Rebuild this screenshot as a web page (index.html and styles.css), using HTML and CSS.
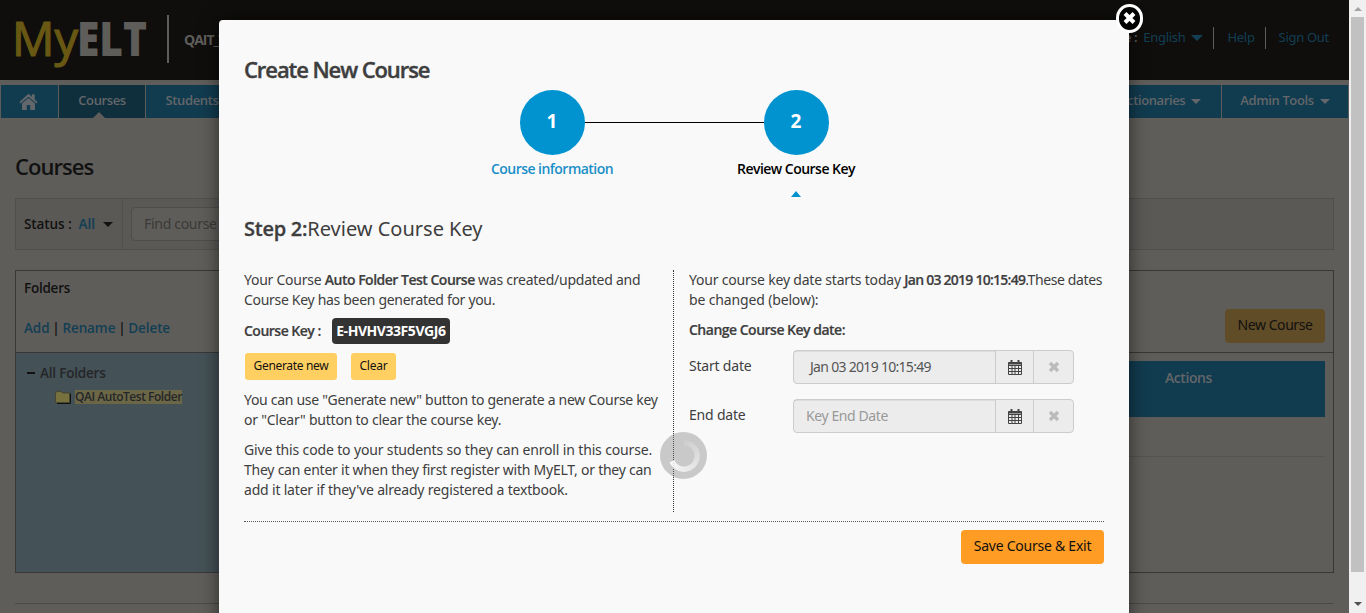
FILE: index.html
```html
<!DOCTYPE html>
<html lang="en">
<head>
<meta charset="utf-8">
<title>MyELT</title>
<link rel="stylesheet" href="styles.css">
</head>
<body>
<div class="window">
  <div class="page">
    <header class="top">
      <svg class="logo" width="132" height="54" viewBox="0 0 132 54">
        <text class="logo-my" x="-4" y="41" textLength="66" lengthAdjust="spacingAndGlyphs">My</text>
        <text class="logo-elt" x="61" y="41" textLength="70" lengthAdjust="spacingAndGlyphs">ELT</text>
      </svg>
      <span class="org">QAIT_T</span>
      <div class="account">
        <span class="lang">Language :</span>
        <a class="english">English</a><i class="caret big"></i>
        <a class="help">Help</a>
        <a class="signout">Sign Out</a>
      </div>
    </header>
    <nav class="nav">
      <a class="tab home"><svg width="20" height="18" viewBox="0 0 20 18"><path d="M9.500.8.3 9.100l1.300 1.500L9.500 3.700l7.900 6.900 1.300-1.500-3-2.700V1.300h-2.800v2.500z"/><path d="M3 10.600 9.500 5l6.500 5.600V17h-4.800v-5H7.800v5H3z"/></svg></a>
      <a class="tab active">Courses</a>
      <a class="tab students">Students</a>
      <span class="grow"></span>
      <a class="tab dict">Dictionaries<i class="caret"></i></a>
      <a class="tab admin">Admin Tools<i class="caret"></i></a>
    </nav>
    <main class="main">
      <h1>Courses</h1>
      <div class="filter">
        <div class="status"><b>Status :</b><a>All</a><i class="caret"></i></div>
        <div class="find">Find course</div>
      </div>
      <div class="board">
        <div class="folders">
          <div class="folders-head">
            <b>Folders</b>
            <div class="links"><a>Add</a><b>|</b><a>Rename</a><b>|</b><a>Delete</a></div>
          </div>
          <div class="tree">
            <div class="root"><i class="minus"></i>All Folders</div>
            <div class="leaf"><svg width="16" height="14" viewBox="0 0 16 14"><path class="f-shadow" d="M2 13.500h13.500V3.500"/><path class="f-body" d="M.5 12.500V3L2 1.500h4L7.500 3h7v9.500z"/></svg><span>QAI AutoTest Folder</span></div>
          </div>
        </div>
        <div class="list">
          <div class="list-head"><span class="new">New Course</span></div>
          <div class="thead">Actions</div>
          <div class="trow"></div>
        </div>
      </div>
      <div class="rule"></div>
    </main>
  </div>
  <div class="scroll"><i class="up"></i><div class="thumb"></div><i class="down"></i></div>

  <section class="modal">
    <svg class="close" width="28" height="30" viewBox="0 0 28 30"><rect x="1.500" y="1.500" width="24" height="26" rx="12" ry="12.500"/><path d="m9 9.500 9 9m0-9-9 9"/></svg>
    <h2>Create New Course</h2>
    <div class="steps">
      <div class="step first"><span class="dot">1</span><span class="label">Course information</span></div>
      <div class="join"></div>
      <div class="step second"><span class="dot">2</span><span class="label">Review Course Key</span><i class="tip"></i></div>
    </div>
    <h3><b>Step 2:</b><span>Review Course Key</span></h3>
    <div class="cols">
      <div class="left">
        <p><span class="a1">Your Course <b>Auto Folder Test Course</b> was created/updated and</span><br><span class="a2">Course Key has been generated for you.</span></p>
        <div class="key"><b>Course Key :</b><code>E-HVHV33F5VGJ6</code></div>
        <div class="acts"><span class="btn gen">Generate new</span><span class="btn clear">Clear</span></div>
        <p><span class="a3">You can use "Generate new" button to generate a new Course key</span><br><span class="a4">or "Clear" button to clear the course key.</span></p>
        <p><span class="a5">Give this code to your students so they can enroll in this course.</span><br><span class="a6">They can enter it when they first register with MyELT, or they can</span><br><span class="a7">add it later if they've already registered a textbook.</span></p>
      </div>
      <div class="right">
        <p><span class="b1">Your course key date starts today <b>Jan 03 2019 10:15:49</b><span class="b1-end">.These dates</span></span><br><span class="b2">be changed (below):</span></p>
        <p class="b3"><b>Change Course Key date:</b></p>
        <div class="field"><label>Start date</label><div class="group">
          <span class="input value">Jan 03 2019 10:15:49</span>
          <span class="addon"><svg width="14" height="15" viewBox="0 0 14 15"><path class="cal" d="M.5 2.500h13v12H.5zM.5 5.500h13M.5 8.500h13M.5 11.500h13M4 5.500v9M7 5.500v9M10.500 5.500v9"/><path class="ring" d="M.5 3.500h13M3.500 0v4M10.500 0v4"/></svg></span>
          <span class="addon last"><svg width="12" height="12" viewBox="0 0 12 12"><path class="x" d="m2 2 8 8m0-8-8 8"/></svg></span></div></div>
        <div class="field"><label>End date</label><div class="group">
          <span class="input hint">Key End Date</span>
          <span class="addon"><svg width="14" height="15" viewBox="0 0 14 15"><path class="cal" d="M.5 2.500h13v12H.5zM.5 5.500h13M.5 8.500h13M.5 11.500h13M4 5.500v9M7 5.500v9M10.500 5.500v9"/><path class="ring" d="M.5 3.500h13M3.500 0v4M10.500 0v4"/></svg></span>
          <span class="addon last"><svg width="12" height="12" viewBox="0 0 12 12"><path class="x" d="m2 2 8 8m0-8-8 8"/></svg></span></div></div>
      </div>
    </div>
    <div class="foot"><span class="save">Save Course &amp; Exit</span></div>
    <div class="spinner"><i></i></div>
  </section>
</div>
</body>
</html>
```
FILE: styles.css
```css
* { box-sizing: border-box; }
body {
  margin: 0;
  overflow: hidden;
  font: 14px/20px "Noto Sans", "Open Sans", sans-serif;
  color: #3e3e3e;
}
b, h1, h2, h3 { font-family: "Open Sans", "Noto Sans", sans-serif; font-weight: 600; }
h1, h2, h3, p { margin: 0; }
a { color: #123f54; }
svg { display: block; }
.window { position: relative; display: flex; width: 1366px; height: 613px; overflow: hidden; }
.page { width: 1349px; background: #5f5d5a; color: #111; white-space: nowrap; }

/* header */
.top { display: flex; height: 80px; background: #0f0e0c; }
.logo { margin: 15px 0 0 16px; overflow: visible; }
.logo-my { font: 400 47px "Open Sans", sans-serif; fill: #685813; stroke: #685813; stroke-width: 1.2px; }
.logo-elt { font: 800 47px "Open Sans", sans-serif; fill: #5f5d5a; }
.org { height: 48px; margin: 15px 0 0 19px; padding-left: 15px; border-left: 2px solid #5f5d5a; font: 700 14px/50px "Open Sans", sans-serif; color: #5f5d5a; letter-spacing: -1px; }
.account { display: flex; align-items: center; height: 22px; margin: 27px 20px 0 auto; font-size: 13px; line-height: 18px; letter-spacing: -.3px; }
.lang { color: #5f5d5a; margin-right: 6px; font-weight: 600; }
.help { border-left: 1px solid #5f5d5a; margin-left: 10px; padding: 1px 10px 3px 13px; }
.signout { border-left: 1px solid #5f5d5a; padding: 1px 0 3px 13px; }
.account .english, .lang { padding-bottom: 2px; }
.caret { display: inline-block; border: 5px solid transparent; border-top: 5px solid currentColor; border-bottom: 0; }
.big { border-width: 6px 6px 0; margin-left: 6px; margin-bottom: 1px; color: #123f54; }

.nav { display: flex; gap: 1px; margin-top: 5px; padding: 0 1px; height: 33px; font: 600 13px/32px "Open Sans", sans-serif; letter-spacing: -.38px; }
.tab { display: flex; align-items: center; justify-content: center; padding-bottom: 3px; background: #113b4e; color: #63666a; }
.home { width: 57px; padding: 0 2px 0 0; }
.home svg { fill: #63666a; }
.active { position: relative; width: 86px; background: #102f3d; }
.active::after { content: ""; position: absolute; left: 34px; bottom: 0; border: 6px solid transparent; border-top: 0; border-bottom-color: #5f5d5a; }
.students { width: 92px; }
.grow { flex: 1; background: #113b4e; margin: 0 -1px; }
.dict, .admin { width: 126px; gap: 6px; }
.tab .caret { margin-top: 2px; }

/* course page */
.main { padding: 0 15px; }
h1 { padding-top: 33px; font-size: 22px; line-height: 30px; letter-spacing: -.95px; }
.filter { display: flex; height: 52px; margin-top: 17px; border: 1px solid #504f4c; background: #5b5956; }
.status { display: flex; align-items: center; width: 107px; padding-left: 8px; border-right: 1px solid #504f4c; font-weight: 600; font-size: 13.500px; letter-spacing: -.1px; }
.status a { margin: 0 8px 0 7px; }
.find { width: 200px; height: 34px; margin: 8px; padding: 0 12px; border: 1px solid #4e4d4a; border-radius: 4px; background: #5f5d5a; line-height: 31px; color: #3b3a38; letter-spacing: -.3px; }
.board { display: flex; height: 303px; margin-top: 20px; border: 1px solid #383735; }
.folders { width: 300px; border-right: 1px solid #383735; }
.folders-head { height: 82px; padding: 7px 8px; border-bottom: 1px solid #383735; font-size: 13.500px; letter-spacing: -.25px; }
.links { display: flex; gap: 2px; margin-top: 20px; }
.links a { font-family: "Open Sans", sans-serif; font-weight: 600; letter-spacing: -.1px; }
.links b { width: 9px; text-align: center; }
.tree { height: 219px; padding: 10px 11px; background: #445156; font: 600 13.500px/20px "Open Sans", sans-serif; color: #242629; letter-spacing: -.2px; }
.root { display: flex; align-items: center; gap: 5px; }
.minus { width: 8px; height: 2px; background: #111; }
.leaf { display: flex; align-items: center; gap: 4px; margin: 7px 0 0 28px; font-size: 12px; line-height: 14px; letter-spacing: -.47px; }
.leaf span { background: #6b6646; }
.f-body { fill: #77713f; stroke: #47452b; }
.f-shadow { fill: none; stroke: #111; }
.list { flex: 1; }
.list-head { display: flex; justify-content: flex-end; height: 82px; padding: 38px 8px 0; border-bottom: 1px solid #383735; }
.new { width: 100px; height: 34px; border-radius: 4px; background: #604c27; text-align: center; line-height: 31px; letter-spacing: -.45px; }
.thead { height: 56px; margin: 8px 8px 0; padding: 7px 113px; background: #113b4e; color: #63666a; text-align: right; font: 600 14px/20px "Open Sans", sans-serif; letter-spacing: -.4px; }
.trow { height: 40px; margin: 0 8px; border-bottom: 1px solid #54534f; }
.rule { height: 1px; margin-top: 30px; background: #4b4a47; }

/* window scroll bar */
.scroll { display: flex; flex-direction: column; align-items: center; width: 17px; background: #f0f0f0; }
.up { margin: 7px 0 6px; border: 4px solid transparent; border-top: 0; border-bottom: 4px solid #a3a3a3; }
.thumb { width: 13px; height: 555px; background: #c1c1c1; }
.down { margin-top: 30px; border: 4px solid transparent; border-bottom: 0; border-top: 4px solid #505050; }

/* dialog */
.modal { position: absolute; left: 219px; top: 20px; width: 910px; height: 620px; padding: 34px 25px 0; border-radius: 4px; background: #f9f9f9; box-shadow: 0 0 18px rgba(0, 0, 0, .55); }
.close { position: absolute; left: 897px; top: -16px; }
.close rect { fill: #000; stroke: #fff; stroke-width: 3; }
.close path { stroke: #fff; stroke-width: 4; }
h2 { font-size: 22px; line-height: 30px; letter-spacing: -1.08px; -webkit-text-stroke: .4px; }
.steps { display: flex; justify-content: center; height: 108px; margin-top: 6px; }
.step { display: flex; flex-direction: column; align-items: center; width: 65px; white-space: nowrap; }
.dot { flex: none; width: 65px; height: 65px; border-radius: 50%; background: #0093d0; color: #fff; text-align: center; font: 700 19px/63px "Open Sans", sans-serif; }
.label { margin-top: 4px; font: 600 14px/20px "Open Sans", sans-serif; letter-spacing: -.53px; }
.first .label { color: #1a8fc8; }
.second .label { color: #000; }
.tip { margin-top: 12px; border: 5px solid transparent; border-top: 0; border-bottom: 6px solid #0093d0; }
.join { width: 179px; height: 1px; margin-top: 32px; background: #000; }
h3 { margin-top: 16px; font: 400 20px/30px "Noto Sans", sans-serif; }
h3 b { letter-spacing: -.25px; -webkit-text-stroke: .3px; }
.cols { display: flex; height: 242px; margin-top: 26px; white-space: nowrap; }
.cols p { margin-bottom: 10px; }
.left { width: 430px; height: 242px; border-right: 1px dotted #333; }
.right { width: 430px; padding-left: 15px; }
.left b, .right b { -webkit-text-stroke: .2px; }
.a1 { letter-spacing: -.25px; }
.a1 b, .b3 { letter-spacing: -.5px; }
.a2 { letter-spacing: -.31px; }
.a3 { letter-spacing: -.3px; }
.a4 { letter-spacing: -.23px; }
.a5 { letter-spacing: -.15px; }
.a6 { letter-spacing: -.24px; }
.a7 { letter-spacing: -.19px; }
.b1 { letter-spacing: -.2px; }
.b1 b { letter-spacing: -.75px; }
.b1-end { letter-spacing: -.38px; }
.b2 { letter-spacing: -.15px; }
.key { display: flex; align-items: center; gap: 11px; margin-top: -2px; height: 26px; letter-spacing: -.5px; }
.key code { width: 118px; height: 26px; border-radius: 4px; background: #333; color: #fff; font: 700 14px/25px "Open Sans", sans-serif; text-align: center; letter-spacing: -.45px; }
.acts { display: flex; gap: 14px; margin: 9px 0 10px 1px; }
.btn { height: 27px; border-radius: 3px; background: #ffcf61; color: #111; text-align: center; font-size: 12px; line-height: 26px; }
.gen { width: 92px; letter-spacing: -.33px; }
.clear { width: 45px; letter-spacing: -.2px; }
.field { display: flex; height: 34px; margin-top: 15px; }
.b3 + .field { margin-top: 0; }
.field label { width: 104px; line-height: 32px; letter-spacing: -.2px; }
.group { display: flex; width: 281px; border: 1px solid #ccc; border-radius: 4px; background: #ececec; }
.input { width: 201px; padding-left: 12px; line-height: 32px; box-shadow: inset 0 1px 1px rgba(0, 0, 0, .07); }
.value { padding-left: 16px; color: #555; letter-spacing: -.7px; }
.hint { color: #999; letter-spacing: -.4px; }
.addon { display: flex; align-items: center; justify-content: center; width: 38px; border-left: 1px solid #ccc; }
.last { flex: 1; }
.cal, .ring, .x { fill: none; stroke: #444; }
.ring { stroke-width: 2; }
.x { stroke: #bbb; stroke-width: 3.400; }
.foot { display: flex; justify-content: flex-end; padding-top: 8px; margin-top: 9px; border-top: 1px dotted #555; }
.save { width: 143px; height: 34px; border-radius: 4px; background: #ff9c24; color: #111; text-align: center; line-height: 32px; letter-spacing: -.25px; }
.spinner { position: absolute; left: 441px; top: 412px; display: grid; place-items: center; width: 47px; height: 47px; border-radius: 50%; background: rgba(120, 120, 120, .37); }
.spinner i { width: 32px; height: 32px; border-radius: 50%; background: conic-gradient(rgba(255,255,255,.1), rgba(255,255,255,.85) 68%, transparent 69%); -webkit-mask: radial-gradient(circle, transparent 10px, #000 11px); mask: radial-gradient(circle, transparent 10px, #000 11px); }
```
